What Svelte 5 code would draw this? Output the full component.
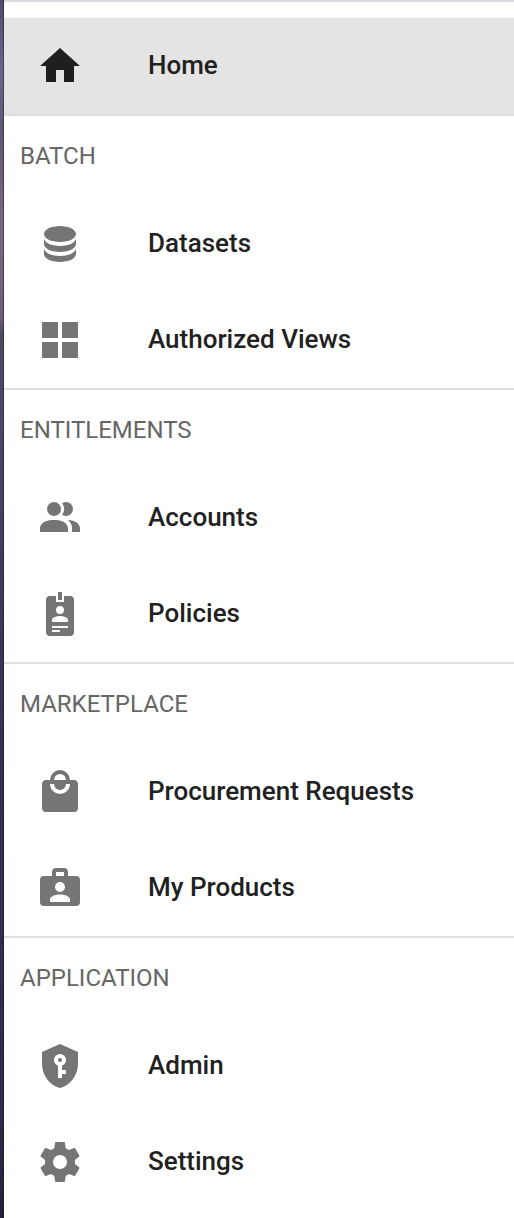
<script>
  const icons = {
    home: 'M10,20V14H14V20H19V12H22L12,3L2,12H5V20H10Z',
    database:
      'M12,3C7.58,3 4,4.79 4,7C4,9.21 7.58,11 12,11C16.42,11 20,9.21 20,7C20,4.79 16.42,3 12,3M4,9V12C4,14.21 7.58,16 12,16C16.42,16 20,14.21 20,12V9C20,11.21 16.42,13 12,13C7.58,13 4,11.21 4,9M4,14V17C4,19.21 7.58,21 12,21C16.42,21 20,19.21 20,17V14C20,16.21 16.42,18 12,18C7.58,18 4,16.21 4,14Z',
    grid: 'M3,11H11V3H3M3,21H11V13H3M13,21H21V13H13M13,3V11H21V3',
    people:
      'M16 17V19H2V17S2 13 9 13 16 17 16 17M12.5 7.5A3.5 3.5 0 1 0 9 11A3.5 3.5 0 0 0 12.5 7.5M15.94 13A5.32 5.32 0 0 1 18 17V19H22V17S22 13.37 15.94 13M15 4A3.39 3.39 0 0 0 13.07 4.59A5 5 0 0 1 13.07 10.41A3.39 3.39 0 0 0 15 11A3.5 3.5 0 0 0 15 4Z',
    badge:
      'M17,3H14V6H10V3H7A2,2 0 0,0 5,5V21A2,2 0 0,0 7,23H17A2,2 0 0,0 19,21V5A2,2 0 0,0 17,3M12,8A2,2 0 0,1 14,10A2,2 0 0,1 12,12A2,2 0 0,1 10,10A2,2 0 0,1 12,8M16,16H8V15C8,13.67 10.67,13 12,13C13.33,13 16,13.67 16,15V16M13,5H11V1H13V5M16,19H8V18H16V19M12,21H8V20H12V21Z',
    bag: 'M12,13A5,5 0 0,1 7,8H9A3,3 0 0,0 12,11A3,3 0 0,0 15,8H17A5,5 0 0,1 12,13M12,3A3,3 0 0,1 15,6H9A3,3 0 0,1 12,3M19,6H17A5,5 0 0,0 12,1A5,5 0 0,0 7,6H5C3.89,6 3,6.89 3,8V20A2,2 0 0,0 5,22H19A2,2 0 0,0 21,20V8C21,6.89 20.1,6 19,6Z',
    briefcase:
      'M14,6V4H10V6H14M20,6A2,2 0 0,1 22,8V19A2,2 0 0,1 20,21H4A2,2 0 0,1 2,19V8A2,2 0 0,1 4,6H8V4A2,2 0 0,1 10,2H14A2,2 0 0,1 16,4V6H20M12,9A2.5,2.5 0 0,0 9.5,11.5A2.5,2.5 0 0,0 12,14A2.5,2.5 0 0,0 14.5,11.5A2.5,2.5 0 0,0 12,9M17,19V17.75C17,16.37 14.76,15.25 12,15.25C9.24,15.25 7,16.37 7,17.75V19H17Z',
    shield:
      'M12,8A1,1 0 0,1 13,9A1,1 0 0,1 12,10A1,1 0 0,1 11,9A1,1 0 0,1 12,8M21,11C21,16.55 17.16,21.74 12,23C6.84,21.74 3,16.55 3,11V5L12,1L21,5V11M12,6A3,3 0 0,0 9,9C9,10.31 9.83,11.42 11,11.83V18H13V16H15V14H13V11.83C14.17,11.42 15,10.31 15,9A3,3 0 0,0 12,6Z',
    cog: 'M12,15.5A3.5,3.5 0 0,1 8.5,12A3.5,3.5 0 0,1 12,8.5A3.5,3.5 0 0,1 15.5,12A3.5,3.5 0 0,1 12,15.5M19.43,12.97C19.47,12.65 19.5,12.33 19.5,12C19.5,11.67 19.47,11.34 19.43,11L21.54,9.37C21.73,9.22 21.78,8.95 21.66,8.73L19.66,5.27C19.54,5.05 19.27,4.96 19.05,5.05L16.56,6.05C16.04,5.66 15.5,5.32 14.87,5.07L14.5,2.42C14.46,2.18 14.25,2 14,2H10C9.75,2 9.54,2.18 9.5,2.42L9.13,5.07C8.5,5.32 7.96,5.66 7.44,6.05L4.95,5.05C4.73,4.96 4.46,5.05 4.34,5.27L2.34,8.73C2.21,8.95 2.27,9.22 2.46,9.37L4.57,11C4.53,11.34 4.5,11.67 4.5,12C4.5,12.33 4.53,12.65 4.57,12.97L2.46,14.63C2.27,14.78 2.21,15.05 2.34,15.27L4.34,18.73C4.46,18.95 4.73,19.03 4.95,18.95L7.44,17.94C7.96,18.34 8.5,18.68 9.13,18.93L9.5,21.58C9.54,21.82 9.75,22 10,22H14C14.25,22 14.46,21.82 14.5,21.58L14.87,18.93C15.5,18.67 16.04,18.34 16.56,17.94L19.05,18.95C19.27,19.03 19.54,18.95 19.66,18.73L21.66,15.27C21.78,15.05 21.73,14.78 21.54,14.63L19.43,12.97Z'
  };

  const sections = [
    { items: [{ label: 'Home', icon: 'home', active: true }] },
    { title: 'BATCH', items: [{ label: 'Datasets', icon: 'database' }, { label: 'Authorized Views', icon: 'grid' }] },
    { title: 'ENTITLEMENTS', items: [{ label: 'Accounts', icon: 'people' }, { label: 'Policies', icon: 'badge' }] },
    { title: 'MARKETPLACE', items: [{ label: 'Procurement Requests', icon: 'bag' }, { label: 'My Products', icon: 'briefcase' }] },
    { title: 'APPLICATION', items: [{ label: 'Admin', icon: 'shield' }, { label: 'Settings', icon: 'cog' }] }
  ];
</script>

<div class="page">
  <div class="backdrop"></div>
  <nav class="drawer">
    {#each sections as section}
      <section>
        {#if section.title}
          <h2>{section.title}</h2>
        {/if}
        {#each section.items as item}
          <div class="item" class:active={item.active}>
            <svg viewBox="0 0 24 24" aria-hidden="true"><path d={icons[item.icon]} /></svg>
            <span>{item.label}</span>
          </div>
        {/each}
      </section>
    {/each}
  </nav>
</div>

<style>
  :global(body) {
    margin: 0;
    background: #fff;
  }
  .page {
    display: flex;
    height: 1218px;
    overflow: hidden;
    font-family: Roboto, sans-serif;
  }
  .backdrop {
    box-sizing: border-box;
    width: 4px;
    flex: none;
    border-right: 1px solid rgba(20, 16, 35, 0.45);
    background: linear-gradient(#4f4c6c 0, #68668a 70px, #5f5872 130px, #7a6680 220px, #715f78 315px, #4d4a62 335px, #494865 430px, #39375a 620px, #302f4d 820px, #2d2d47 1100px, #22223b 1218px);
  }
  .drawer {
    flex: 1;
    box-sizing: border-box;
    border-top: 2px solid #dcdbe1;
    padding-top: 16px;
    background: #fff;
  }
  section + section {
    border-top: 2px solid #dfdfdf;
  }
  h2 {
    margin: 0;
    padding-left: 16px;
    font-size: 24px;
    font-weight: 400;
    line-height: 80px;
    color: #666;
  }
  .item {
    display: flex;
    align-items: center;
    gap: 64px;
    height: 96px;
    padding-left: 32px;
    color: #212121;
  }
  .item.active {
    background: #e4e4e4;
  }
  svg {
    width: 48px;
    height: 48px;
    flex: none;
    fill: #757575;
  }
  .active svg {
    fill: #1f1f1f;
  }
  span {
    padding-bottom: 2px;
    font-size: 26px;
    font-weight: 500;
    line-height: 40px;
    white-space: nowrap;
  }
</style>
